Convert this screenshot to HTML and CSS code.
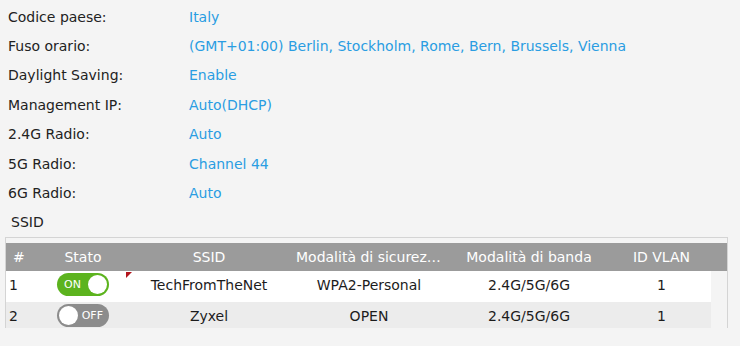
FILE: index.html
```html
<!DOCTYPE html>
<html lang="it">
<head>
    <meta charset="UTF-8">
    <meta name="viewport" content="width=device-width, initial-scale=1.0">
    <title>Stato AP</title>
    <link rel="stylesheet" href="styles.css">
</head>
<body>
    <div class="info">
        <div class="info-row"><span class="label">Codice paese:</span><span class="value">Italy</span></div>
        <div class="info-row"><span class="label">Fuso orario:</span><span class="value">(GMT+01:00) Berlin, Stockholm, Rome, Bern, Brussels, Vienna</span></div>
        <div class="info-row"><span class="label">Daylight Saving:</span><span class="value">Enable</span></div>
        <div class="info-row"><span class="label">Management IP:</span><span class="value">Auto(DHCP)</span></div>
        <div class="info-row"><span class="label">2.4G Radio:</span><span class="value">Auto</span></div>
        <div class="info-row"><span class="label">5G Radio:</span><span class="value">Channel 44</span></div>
        <div class="info-row"><span class="label">6G Radio:</span><span class="value">Auto</span></div>
    </div>

    <div class="section-title">SSID</div>

    <div class="grid">
        <div class="grid-head">
            <div class="cell first">#</div>
            <div class="cell">Stato</div>
            <div class="cell">SSID</div>
            <div class="cell clip">Modalità di sicurezza</div>
            <div class="cell">Modalità di banda</div>
            <div class="cell">ID VLAN</div>
        </div>
        <div class="grid-row">
            <div class="cell first">1</div>
            <div class="cell"><span class="toggle on"><span class="toggle-text">ON</span><span class="knob"></span></span></div>
            <div class="cell dirty">TechFromTheNet</div>
            <div class="cell">WPA2-Personal</div>
            <div class="cell">2.4G/5G/6G</div>
            <div class="cell">1</div>
        </div>
        <div class="grid-row alt">
            <div class="cell first">2</div>
            <div class="cell"><span class="toggle off"><span class="knob"></span><span class="toggle-text">OFF</span></span></div>
            <div class="cell">Zyxel</div>
            <div class="cell">OPEN</div>
            <div class="cell">2.4G/5G/6G</div>
            <div class="cell">1</div>
        </div>
    </div>
</body>
</html>
```

FILE: styles.css
```css
body {
    margin: 0;
    background-color: #f4f4f4;
    color: #222222;
    font-family: "DejaVu Sans", sans-serif;
    font-size: 14px;
}
.info {
    padding: 2px 0 0 8px;
}
.info-row {
    display: flex;
    align-items: center;
    height: 29.4px;
}
.label {
    width: 181px;
}
.value {
    color: #2a9de2;
}
.section-title {
    display: flex;
    align-items: center;
    height: 29px;
    padding-left: 11px;
}
.grid {
    box-sizing: border-box;
    width: 723px;
    height: 91px;
    margin-left: 5px;
    padding-top: 5px;
    border: 1px solid #d4d4d4;
    border-bottom: none;
    overflow: hidden;
}
.grid-head,
.grid-row {
    display: grid;
    grid-template-columns: 34px 86px 166px 154px 166px 99px;
}
.grid-head {
    height: 28px;
    background-color: #9b9b9b;
    color: #ffffff;
    padding-right: 16px;
}
.grid-row {
    height: 31px;
    width: 705px;
    background-color: #ffffff;
    color: #1c1c1c;
}
.grid-row .cell {
    padding-bottom: 3px;
}
.grid-row.alt {
    background-color: #ececec;
}
.cell {
    display: flex;
    align-items: center;
    justify-content: center;
    white-space: nowrap;
    min-width: 0;
}
.cell.first {
    justify-content: flex-start;
    padding-left: 3px;
}
.grid-head .cell.first {
    padding-left: 7px;
}
.cell.clip {
    display: block;
    line-height: 28px;
    padding: 0 4px;
    overflow: hidden;
    text-overflow: ellipsis;
}
.cell.dirty {
    position: relative;
}
.cell.dirty::before {
    content: "";
    position: absolute;
    top: 1px;
    left: 0;
    border-top: 6px solid #b3141c;
    border-right: 6px solid transparent;
}
.toggle {
    box-sizing: border-box;
    display: flex;
    align-items: center;
    justify-content: space-between;
    width: 52px;
    height: 23px;
    padding: 0 2px 0 7px;
    border-radius: 12px;
    color: #ffffff;
    font-size: 11px;
}
.toggle.on {
    background-color: #5cb31e;
}
.toggle.off {
    background-color: #8c8c8c;
    padding: 0 6px 0 2px;
}
.knob {
    width: 19px;
    height: 19px;
    border-radius: 50%;
    background-color: #ffffff;
}
```
